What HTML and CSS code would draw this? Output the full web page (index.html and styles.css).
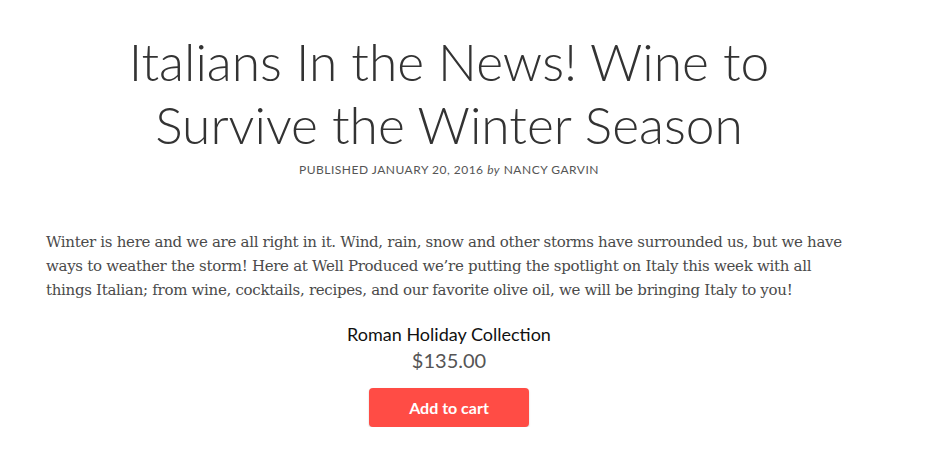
FILE: index.html
```html
<!DOCTYPE html>
<html>
<head>
    <title>Italians In the News! Wine to Survive the Winter Season</title>
    <link rel="stylesheet" href="styles.css">
</head>
<body>
    <article class="post">
        <header class="post-header">
            <h1 class="post-title">Italians In the News! Wine to Survive the Winter Season</h1>
            <p class="post-meta">Published January 20, 2016 <em>by</em> Nancy Garvin</p>
        </header>

        <div class="post-body">
            <p>Winter is here and we are all right in it. Wind, rain, snow and other storms have surrounded us, but we have ways to weather the storm! Here at Well Produced we&rsquo;re putting the spotlight on Italy this week with all things Italian; from wine, cocktails, recipes, and our favorite olive oil, we will be bringing Italy to you!</p>
        </div>

        <div class="product">
            <div class="product-name">Roman Holiday Collection</div>
            <div class="product-price">$135.00</div>
            <button class="add-to-cart">Add to cart</button>
        </div>
    </article>
</body>
</html>
```

FILE: styles.css
```css
body {
    margin: 0;
    background-color: #fff;
    font-family: "DejaVu Serif", Georgia, serif;
}

.post {
    width: 806px;
    margin: 0 0 0 46px;
}

.post-header {
    text-align: center;
    padding-top: 30px;
}

.post-title {
    font-family: Lato, "Open Sans", sans-serif;
    font-weight: 300;
    font-size: 51.5px;
    line-height: 63px;
    color: #333;
    margin: 0 auto;
    width: 660px;
}

.post-meta {
    font-family: Lato, "Open Sans", sans-serif;
    font-size: 12px;
    text-transform: uppercase;
    color: #555;
    margin: 6px 0 0;
    letter-spacing: 0.5px;
}

.post-meta em {
    text-transform: none;
}

.post-body {
    padding-top: 53px;
}

.post-body p {
    font-size: 15px;
    line-height: 24px;
    letter-spacing: -0.3px;
    color: #4a4a4a;
    margin: 0;
}

.product {
    display: flex;
    flex-direction: column;
    align-items: center;
    padding-top: 20px;
    font-family: Lato, "Open Sans", sans-serif;
}

.product-name {
    font-size: 18px;
    color: #111;
    line-height: 24px;
}

.product-price {
    font-size: 20px;
    color: #555;
    line-height: 28px;
}

.add-to-cart {
    margin-top: 14px;
    width: 160px;
    height: 39px;
    border: none;
    border-radius: 4px;
    background-color: #ff4c45;
    color: #fff;
    font-family: Lato, "Open Sans", sans-serif;
    font-weight: 700;
    font-size: 16px;
    cursor: pointer;
    box-shadow: 0 1px 2px rgba(0, 0, 0, 0.2);
}
```
